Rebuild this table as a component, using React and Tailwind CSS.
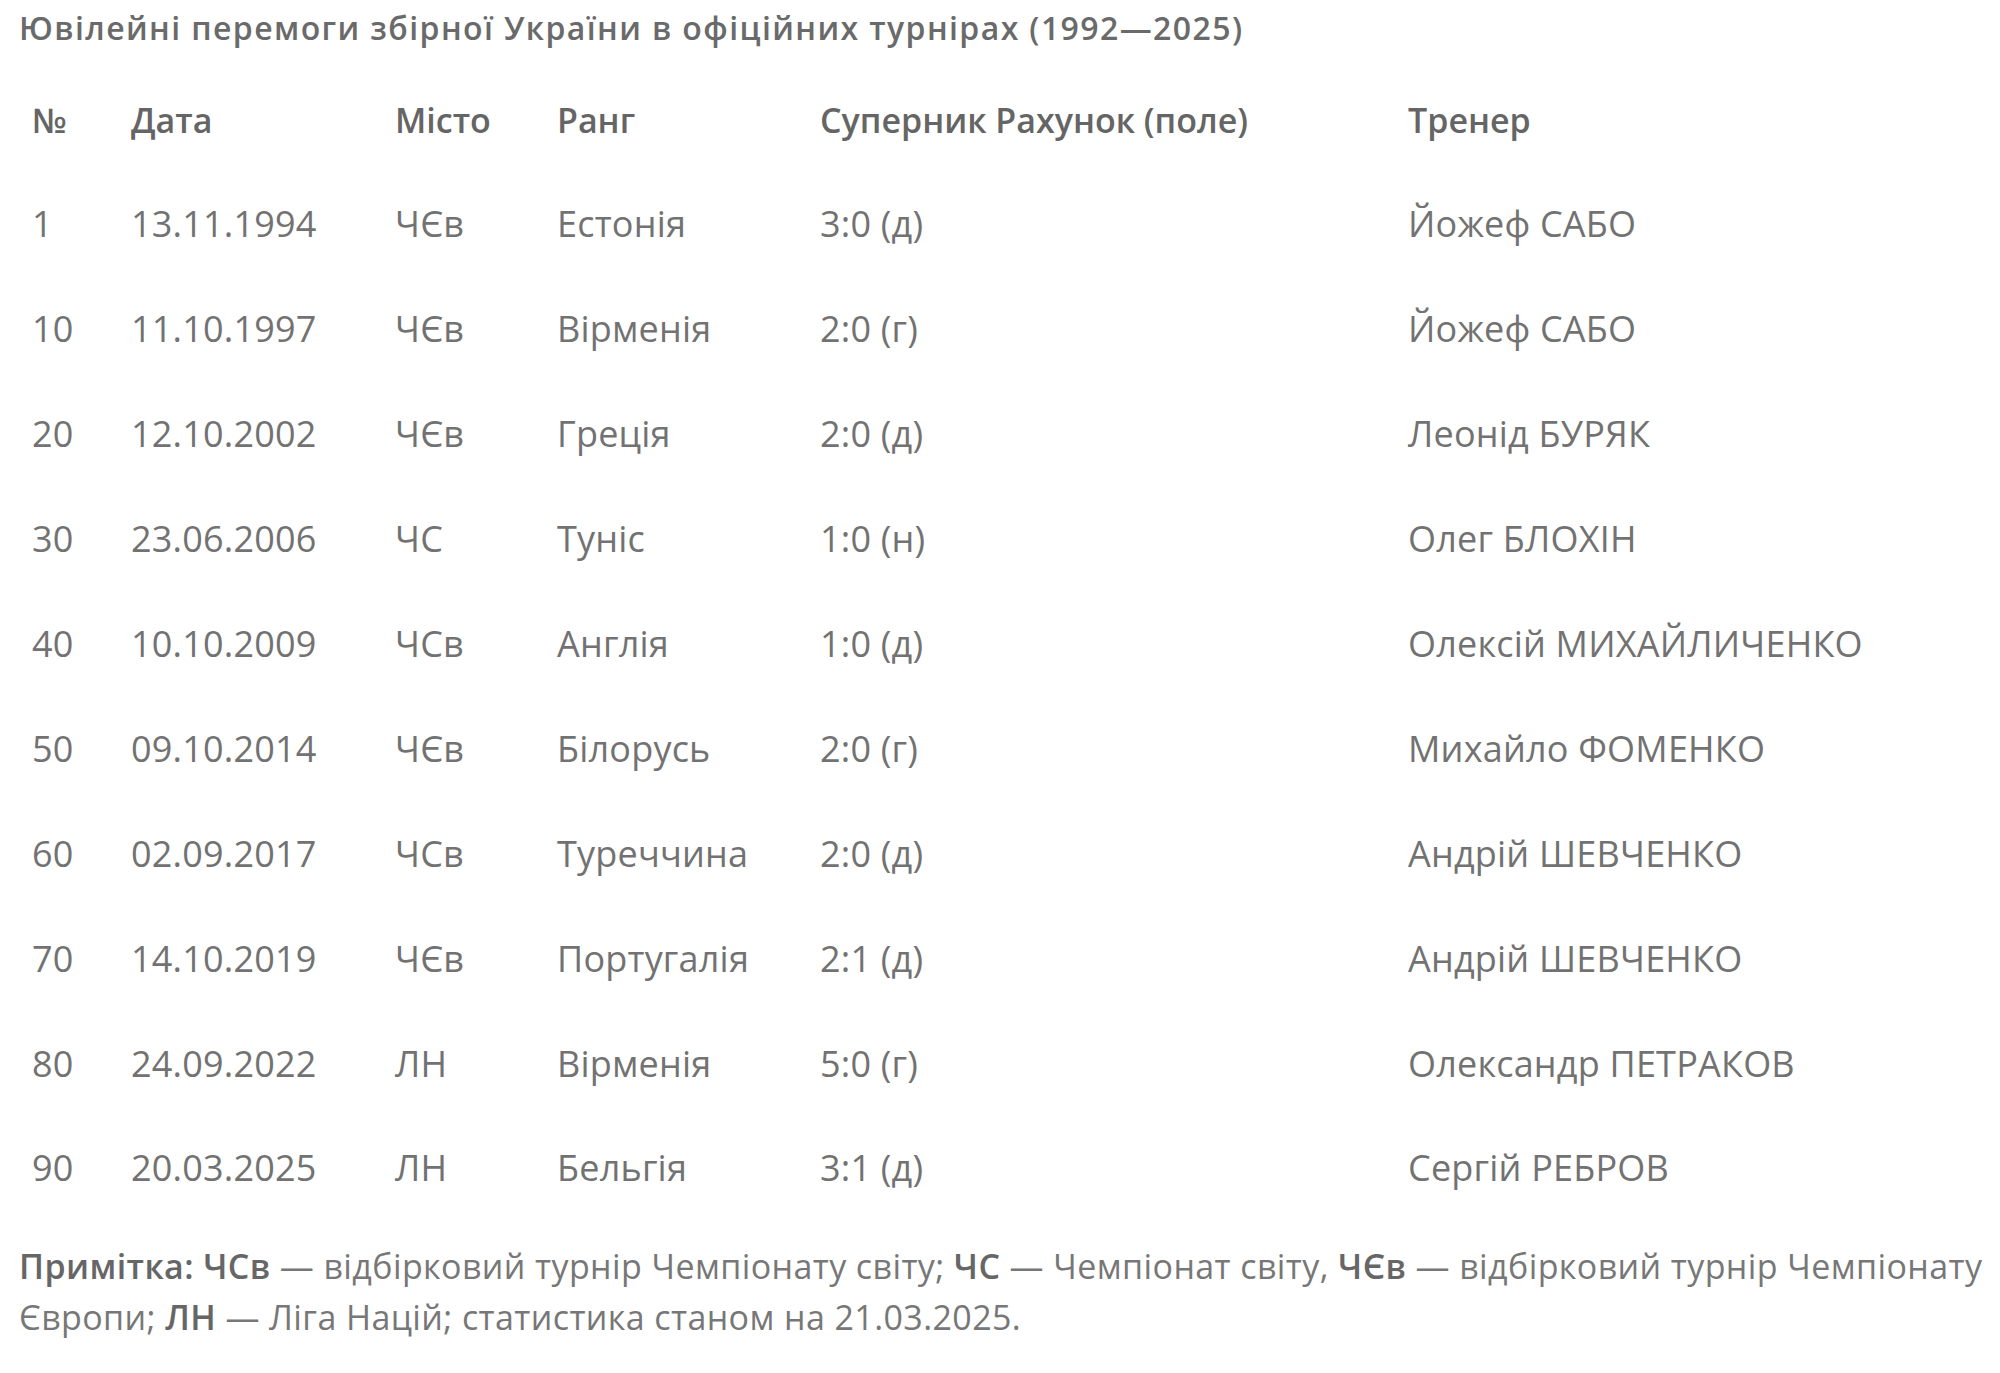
import React from "react";

const rows = [
  ["1", "13.11.1994", "ЧЄв", "Естонія", "3:0 (д)", "Йожеф САБО"],
  ["10", "11.10.1997", "ЧЄв", "Вірменія", "2:0 (г)", "Йожеф САБО"],
  ["20", "12.10.2002", "ЧЄв", "Греція", "2:0 (д)", "Леонід БУРЯК"],
  ["30", "23.06.2006", "ЧС", "Туніс", "1:0 (н)", "Олег БЛОХІН"],
  ["40", "10.10.2009", "ЧСв", "Англія", "1:0 (д)", "Олексій МИХАЙЛИЧЕНКО"],
  ["50", "09.10.2014", "ЧЄв", "Білорусь", "2:0 (г)", "Михайло ФОМЕНКО"],
  ["60", "02.09.2017", "ЧСв", "Туреччина", "2:0 (д)", "Андрій ШЕВЧЕНКО"],
  ["70", "14.10.2019", "ЧЄв", "Португалія", "2:1 (д)", "Андрій ШЕВЧЕНКО"],
  ["80", "24.09.2022", "ЛН", "Вірменія", "5:0 (г)", "Олександр ПЕТРАКОВ"],
  ["90", "20.03.2025", "ЛН", "Бельгія", "3:1 (д)", "Сергій РЕБРОВ"],
];

const headers = ["№", "Дата", "Місто", "Ранг", "Суперник Рахунок (поле)", "Тренер"];
// column widths so text starts at x = 32, 131, 395, 557, 820, 1408
const widths = ["w-[112px] pl-[13px]", "w-[264px]", "w-[162px]", "w-[263px]", "w-[588px]", ""];

export default function App() {
  return (
    <div className="min-h-screen bg-white px-[19px] pt-[8px] font-['Open_Sans',sans-serif] text-[#727272]">
      <h3 className="text-[32px] leading-[40px] font-semibold tracking-[1.4px] text-[#6a6a6a] whitespace-nowrap">
        Ювілейні перемоги збірної України в офіційних турнірах (1992—2025)
      </h3>

      <table className="mt-[21px] border-collapse">
        <thead>
          <tr className="h-[103px]">
            {headers.map((h, i) => (
              <th
                key={h}
                className={`${widths[i]} text-left align-middle text-[34px] font-semibold text-[#656565] whitespace-nowrap`}
              >
                {h}
              </th>
            ))}
          </tr>
        </thead>
        <tbody>
          {rows.map((r) => (
            <tr key={r[0]} className="h-[104.9px]">
              {r.map((c, i) => (
                <td
                  key={i}
                  className={`${widths[i]} align-middle text-[36px] tracking-[0.2px] whitespace-nowrap`}
                >
                  {c}
                </td>
              ))}
            </tr>
          ))}
        </tbody>
      </table>

      <p className="mt-[20px] text-[34px] leading-[51px] tracking-[0.4px] text-[#777777] whitespace-nowrap">
        <b className="font-semibold text-[#666666]">Примітка: ЧСв</b> — відбірковий турнір Чемпіонату світу;{" "}
        <b className="font-semibold text-[#666666]">ЧС</b> — Чемпіонат світу,{" "}
        <b className="font-semibold text-[#666666]">ЧЄв</b> — відбірковий турнір Чемпіонату
        <br />
        Європи; <b className="font-semibold text-[#666666]">ЛН</b> — Ліга Націй; статистика станом на 21.03.2025.
      </p>
    </div>
  );
}
